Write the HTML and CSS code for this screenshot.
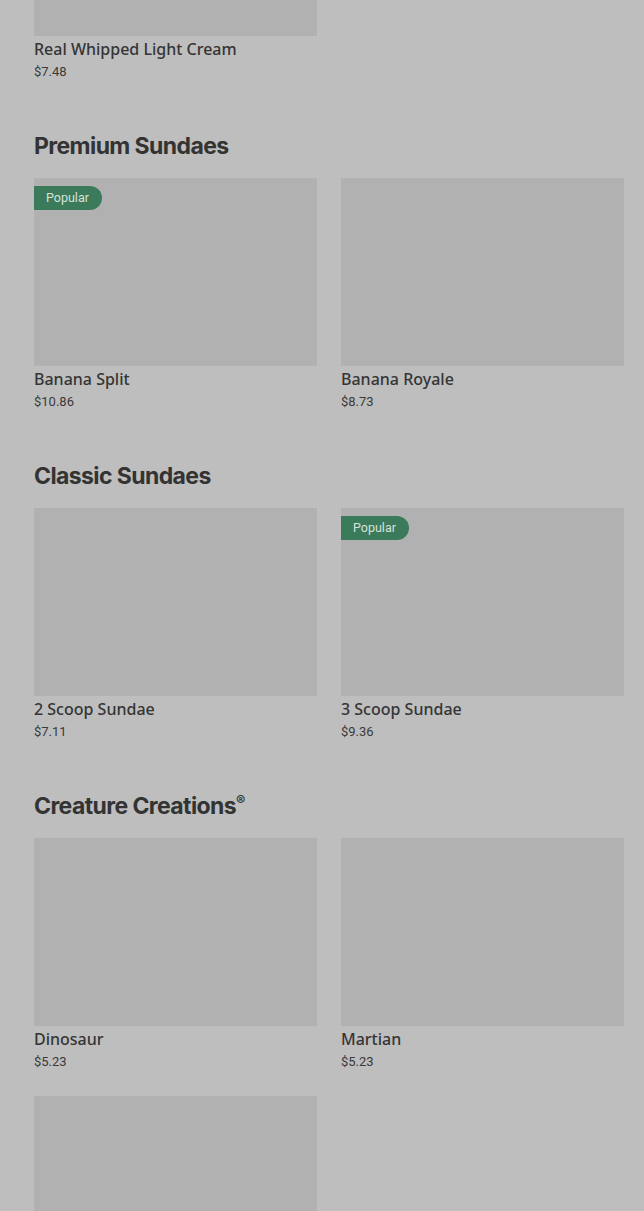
FILE: index.html
```html
<!DOCTYPE html>
<html>
<head>
<meta charset="utf-8">
<link rel="stylesheet" href="styles.css">
</head>
<body>
<main class="menu">
  <section class="section first">
    <div class="grid">
      <div class="card">
        <div class="thumb"></div>
        <div class="name">Real Whipped Light Cream</div>
        <div class="price">$7.48</div>
      </div>
    </div>
  </section>

  <section class="section">
    <h2 class="title">Premium Sundaes</h2>
    <div class="grid">
      <div class="card">
        <div class="thumb"><span class="badge">Popular</span></div>
        <div class="name">Banana Split</div>
        <div class="price">$10.86</div>
      </div>
      <div class="card">
        <div class="thumb"></div>
        <div class="name">Banana Royale</div>
        <div class="price">$8.73</div>
      </div>
    </div>
  </section>

  <section class="section">
    <h2 class="title">Classic Sundaes</h2>
    <div class="grid">
      <div class="card">
        <div class="thumb"></div>
        <div class="name">2 Scoop Sundae</div>
        <div class="price">$7.11</div>
      </div>
      <div class="card">
        <div class="thumb"><span class="badge">Popular</span></div>
        <div class="name">3 Scoop Sundae</div>
        <div class="price">$9.36</div>
      </div>
    </div>
  </section>

  <section class="section">
    <h2 class="title">Creature Creations<sup class="reg">®</sup></h2>
    <div class="grid">
      <div class="card">
        <div class="thumb"></div>
        <div class="name">Dinosaur</div>
        <div class="price">$5.23</div>
      </div>
      <div class="card">
        <div class="thumb"></div>
        <div class="name">Martian</div>
        <div class="price">$5.23</div>
      </div>
      <div class="card">
        <div class="thumb"></div>
      </div>
    </div>
  </section>
</main>
</body>
</html>
```
FILE: styles.css
```css
html, body {
  margin: 0;
  padding: 0;
  background: #bebebe;
  overflow: hidden;
}
body {
  font-family: Roboto, "Liberation Sans", sans-serif;
  color: #333333;
}
.menu {
  margin-top: -152px;
  padding: 0 20px 0 34px;
}
.section {
  margin-top: 48px;
}
.section.first {
  margin-top: 0;
}
.title {
  margin: 0 0 16px;
  font-family: Inter, "Liberation Sans", sans-serif;
  font-size: 23px;
  line-height: 32px;
  font-weight: 700;
  letter-spacing: -0.6px;
  color: #333333;
}
.reg {
  font-size: 14px;
  vertical-align: top;
  line-height: 22px;
  font-weight: 600;
  letter-spacing: 0;
}
.grid {
  display: grid;
  grid-template-columns: 1fr 1fr;
  column-gap: 24px;
  row-gap: 24px;
}
.card {
  display: flex;
  flex-direction: column;
}
.thumb {
  position: relative;
  height: 188px;
  background: #b1b1b1;
  margin-bottom: 1px;
}
.badge {
  position: absolute;
  left: 0;
  top: 8px;
  height: 24px;
  line-height: 24px;
  padding: 0 13px 0 12px;
  font-size: 12.5px;
  color: #d6e2da;
  background: #3b7a5a;
  border-radius: 0 12px 12px 0;
}
.name {
  font-family: "Noto Sans", Roboto, sans-serif;
  font-size: 16px;
  line-height: 25px;
  font-weight: 500;
  color: #353535;
}
.price {
  font-size: 13px;
  line-height: 20px;
  color: #3a3a3a;
}
```
